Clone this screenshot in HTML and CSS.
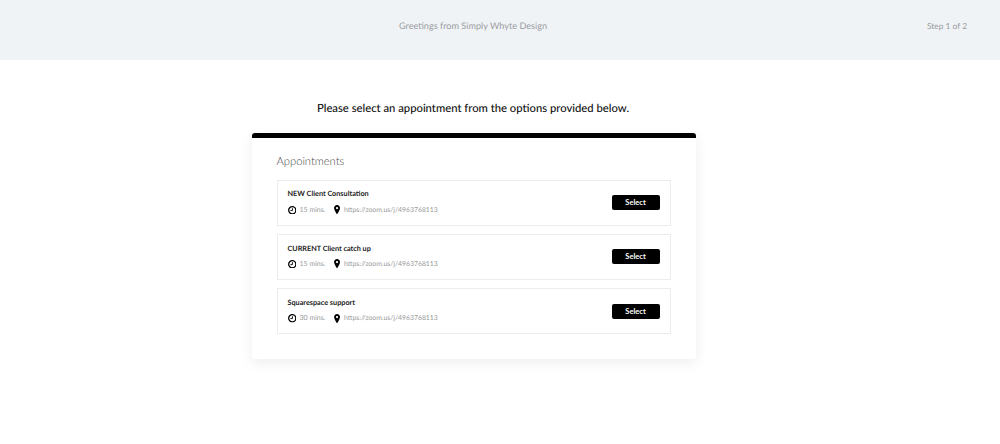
FILE: index.html
```html
<!DOCTYPE html>
<html lang="en">
<head>
<meta charset="UTF-8">
<meta name="viewport" content="width=device-width, initial-scale=1.0">
<title>Appointments</title>
<link rel="stylesheet" href="styles.css">
</head>
<body>

<svg class="icon-defs" width="0" height="0">
  <symbol id="clock" viewBox="0 0 10 10">
    <circle cx="5" cy="5" r="4.2" fill="none" stroke="#000" stroke-width="1.5"/>
    <path d="M5.2 2.6V5.4H2.9" fill="none" stroke="#000" stroke-width="1.1"/>
  </symbol>
  <symbol id="pin" viewBox="0 0 6.4 10">
    <path fill-rule="evenodd" d="M3.2 0C1.4 0 .1 1.400.1 3.200.1 5.400 3.200 10 3.200 10s3.100-4.600 3.100-6.800C6.300 1.400 5 0 3.200 0zm0 2a1.200 1.200 0 1 1 0 2.400 1.200 1.200 0 0 1 0-2.400z" fill="#000"/>
  </symbol>
</svg>

<header class="top-bar">
  <div class="greeting">Greetings from Simply Whyte Design</div>
  <div class="step">Step 1 of 2</div>
</header>

<h1 class="prompt">Please select an appointment from the options provided below.</h1>

<main class="card">
  <h2 class="card-title">Appointments</h2>

  <div class="appt">
    <div class="appt-info">
      <div class="appt-name">NEW Client Consultation</div>
      <div class="appt-meta">
        <svg class="icon-clock"><use href="#clock"/></svg>
        <span class="duration">15 mins.</span>
        <svg class="icon-pin"><use href="#pin"/></svg>
        <span class="location">https://zoom.us/j/4963768113</span>
      </div>
    </div>
    <button type="button" class="select-btn">Select</button>
  </div>

  <div class="appt">
    <div class="appt-info">
      <div class="appt-name">CURRENT Client catch up</div>
      <div class="appt-meta">
        <svg class="icon-clock"><use href="#clock"/></svg>
        <span class="duration">15 mins.</span>
        <svg class="icon-pin"><use href="#pin"/></svg>
        <span class="location">https://zoom.us/j/4963768113</span>
      </div>
    </div>
    <button type="button" class="select-btn">Select</button>
  </div>

  <div class="appt">
    <div class="appt-info">
      <div class="appt-name">Squarespace support</div>
      <div class="appt-meta">
        <svg class="icon-clock"><use href="#clock"/></svg>
        <span class="duration">30 mins.</span>
        <svg class="icon-pin"><use href="#pin"/></svg>
        <span class="location">https://zoom.us/j/4963768113</span>
      </div>
    </div>
    <button type="button" class="select-btn">Select</button>
  </div>
</main>

</body>
</html>
```
FILE: styles.css
```css
html, body {
  height: 100%;
}
body {
  margin: 0;
  font-family: "Lato", "Liberation Sans", sans-serif;
  text-rendering: geometricPrecision;
  background-color: #fff;
}
.icon-defs {
  display: block;
}
.top-bar {
  height: 60px;
  background-color: #f0f3f6;
  color: #9a9da1;
  line-height: 52px;
  display: grid;
  grid-template-columns: 1fr 40px;
  padding: 0 33px 0 19px;
}
.greeting {
  text-align: center;
  font-size: 9.15px;
}
.step {
  text-align: right;
  font-size: 8.4px;
  white-space: nowrap;
}
.prompt {
  margin: 41px 0 0 0;
  width: 946px;
  text-align: center;
  font-size: 11.25px;
  line-height: 16px;
  font-weight: 500;
  color: #111;
}
.card {
  box-sizing: border-box;
  width: 444px;
  height: 226px;
  margin: 15.5px 0 0 251.5px;
  padding: 16px 25px 0;
  background-color: #fff;
  border-top: 5px solid #000;
  border-radius: 3px;
  box-shadow: 0 4px 14px rgba(0, 0, 0, 0.07);
}
.card-title {
  margin: 0 0 10px 0;
  font-size: 11.2px;
  line-height: 16px;
  font-weight: 300;
  color: #444;
}
.appt {
  box-sizing: border-box;
  height: 46px;
  margin-bottom: 8.3px;
  padding: 0 10px 0 10px;
  border: 1px solid #ececec;
  display: flex;
  align-items: center;
  justify-content: space-between;
}
.appt-name {
  font-size: 7.25px;
  line-height: 10px;
  font-weight: 700;
  color: #222;
}
.appt-meta {
  display: flex;
  align-items: center;
  margin-top: 4.5px;
  font-size: 7px;
  line-height: 12px;
  color: #999;
}
.location {
  font-size: 6.85px;
}
.icon-clock {
  width: 8.5px;
  height: 8.5px;
  margin-right: 3.5px;
}
.icon-pin {
  width: 6.1px;
  height: 9.5px;
  margin-right: 3.4px;
}
.duration {
  margin-right: 9px;
}
.select-btn {
  width: 48px;
  height: 15px;
  padding: 0;
  background-color: #000;
  color: #fff;
  border: none;
  border-radius: 2px;
  font-family: inherit;
  font-size: 7.5px;
  font-weight: 700;
  cursor: pointer;
}
```
